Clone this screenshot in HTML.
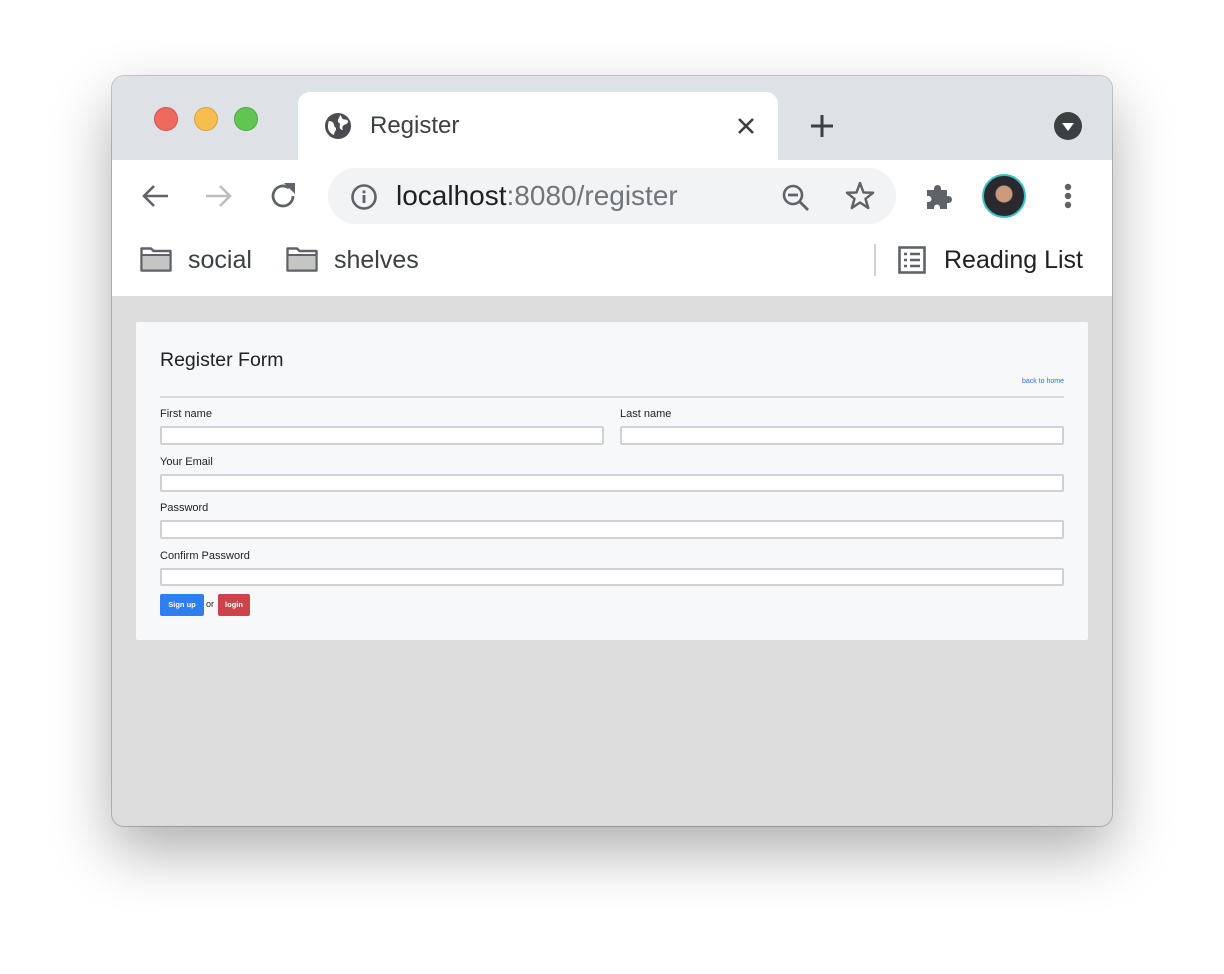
<!DOCTYPE html>
<html><head><style>
*{box-sizing:border-box;margin:0;padding:0}
body{width:1224px;height:974px;background:#fff;font-family:"Liberation Sans",sans-serif;position:relative;overflow:hidden}
.win{position:absolute;left:112px;top:76px;width:1000px;height:750px;border-radius:12px;overflow:hidden;background:#dcdcdc;box-shadow:0 25px 60px rgba(0,0,0,.32),0 0 0 1px rgba(0,0,0,.2)}
.abs{position:absolute}
.strip{left:0;top:0;width:1000px;height:84px;background:#dee1e6}
.dot{width:24px;height:24px;border-radius:50%;top:31px}
.tab{left:186px;top:16px;width:480px;height:70px;background:#fff;border-radius:12px 12px 0 0}
.tb{left:0;top:84px;width:1000px;height:136px;background:#fff}
.url{left:216px;top:92px;width:568px;height:56px;border-radius:28px;background:#f1f3f4}
.t{font-size:25px;color:#3c4043;white-space:nowrap}
.card{left:24px;top:246px;width:952px;height:318px;background:#f7f8fa;border-radius:2px}
.lbl{font-size:11px;color:#222;position:absolute}
.inp{position:absolute;height:19px;background:#fff;border:2px solid #cfd1d4;border-radius:2px}
</style></head><body>
<div class="win">
<div class="abs strip"></div>
<div class="abs dot" style="left:42px;background:#ee6a5f;border:1px solid #d5534a"></div>
<div class="abs dot" style="left:82px;background:#f5be4f;border:1px solid #d9a23c"></div>
<div class="abs dot" style="left:122px;background:#61c554;border:1px solid #4aa93f"></div>
<div class="abs tab"></div>
<svg class="abs" style="left:212px;top:36px" width="28" height="28" viewBox="0 0 28 28"><circle cx="14" cy="14" r="13" fill="#4a4c50"/><path d="M5 9c3 0 5 2 5 4s2 2 2 4-2 3-2 6c-3-1-6-4-6-8 0-2 0-4 1-6zM16 3c2 1 1 3 3 4s4 0 5 2c0 3-2 3-4 4s-2 4-1 5c-3 0-4-3-3-5s-3-2-2-5 2-3 2-5z" fill="#fff"/></svg>
<div class="abs t" style="left:258px;top:36px;font-size:24px">Register</div>
<svg class="abs" style="left:624px;top:40px" width="20" height="20"><path d="M3 3L17 17M17 3L3 17" stroke="#3c4043" stroke-width="2.6"/></svg>
<svg class="abs" style="left:697px;top:37px" width="26" height="26"><path d="M13 2V24M2 13H24" stroke="#3c4043" stroke-width="3"/></svg>
<svg class="abs" style="left:941px;top:35px" width="30" height="30"><circle cx="15" cy="15" r="14" fill="#3c4043"/><path d="M9 12H21L15 20Z" fill="#fff"/></svg>
<div class="abs tb"></div>
<svg class="abs" style="left:28px;top:106px" width="30" height="28"><path d="M28 14H4M14 4L4 14L14 24" stroke="#5f6368" stroke-width="2.6" fill="none"/></svg>
<svg class="abs" style="left:92px;top:106px" width="30" height="28"><path d="M2 14H26M16 4L26 14L16 24" stroke="#bdbdbd" stroke-width="2.6" fill="none"/></svg>
<svg class="abs" style="left:156px;top:104px" width="32" height="32"><path d="M25 16A10 10 0 1 1 21 8" stroke="#5f6368" stroke-width="2.8" fill="none"/><path d="M16 3H27V14Z" fill="#5f6368"/></svg>
<div class="abs url"></div>
<svg class="abs" style="left:238px;top:107px" width="28" height="28"><circle cx="14" cy="14" r="11.5" stroke="#5f6368" stroke-width="2.6" fill="none"/><rect x="12.6" y="12" width="2.8" height="8" fill="#5f6368"/><rect x="12.6" y="7.5" width="2.8" height="2.8" fill="#5f6368"/></svg>
<div class="abs t" style="left:284px;top:104px;font-size:28px;color:#202124">localhost<span style="color:#70757a">:8080/register</span></div>
<svg class="abs" style="left:668px;top:106px" width="32" height="32"><circle cx="13" cy="13" r="9" stroke="#5f6368" stroke-width="2.6" fill="none"/><path d="M8 13H18M20 20L28 28" stroke="#5f6368" stroke-width="2.8"/></svg>
<svg class="abs" style="left:732px;top:104px" width="32" height="32"><path d="M16 3L19.5 12.5L29 12.8L21.5 18.8L24.2 28L16 22.5L7.8 28L10.5 18.8L3 12.8L12.5 12.5Z" stroke="#5f6368" stroke-width="2.5" fill="none" stroke-linejoin="round"/></svg>
<svg class="abs" style="left:812px;top:104px" width="32" height="32"><path d="M3 10H10V8.5A3.5 3.5 0 0 1 17 8.5V10H23V16H24.5A3.5 3.5 0 0 1 24.5 23H23V29H16V27.5A3 3 0 0 0 10 27.5V29H3V22H4.5A3 3 0 0 0 4.5 16H3Z" fill="#5f6368"/></svg>
<div class="abs" style="left:870px;top:98px;width:44px;height:44px;border-radius:50%;background:radial-gradient(circle at 50% 45%,#c99b7c 0 8px,#2a2a2e 9px);border:2px solid #3cc0c8"></div>
<svg class="abs" style="left:946px;top:104px" width="20" height="32"><circle cx="10" cy="7" r="3.2" fill="#5f6368"/><circle cx="10" cy="16" r="3.2" fill="#5f6368"/><circle cx="10" cy="25" r="3.2" fill="#5f6368"/></svg>
<svg class="abs" style="left:28px;top:170px" width="32" height="26"><path d="M1.5 2.5H11L13.5 5H30.5V24.5H1.5Z" fill="#fff" stroke="#5f6368" stroke-width="2.4" stroke-linejoin="round"/><rect x="2.5" y="10" width="27" height="13.5" fill="#c5c5c5"/><path d="M1.5 9H30.5" stroke="#5f6368" stroke-width="2"/></svg>
<div class="abs t" style="left:76px;top:170px">social</div>
<svg class="abs" style="left:174px;top:170px" width="32" height="26"><path d="M1.5 2.5H11L13.5 5H30.5V24.5H1.5Z" fill="#fff" stroke="#5f6368" stroke-width="2.4" stroke-linejoin="round"/><rect x="2.5" y="10" width="27" height="13.5" fill="#c5c5c5"/><path d="M1.5 9H30.5" stroke="#5f6368" stroke-width="2"/></svg>
<div class="abs t" style="left:222px;top:170px">shelves</div>
<div class="abs" style="left:762px;top:168px;width:2px;height:32px;background:#d0d0d0"></div>
<svg class="abs" style="left:786px;top:170px" width="28" height="28"><rect x="1.5" y="1.5" width="25" height="25" stroke="#5f6368" stroke-width="2.6" fill="none"/><path d="M6 8h3M12 8h10M6 14h3M12 14h10M6 20h3M12 20h10" stroke="#5f6368" stroke-width="2.4"/></svg>
<div class="abs t" style="left:832px;top:170px;color:#202124">Reading List</div>
<div class="abs card">
<div class="abs" style="left:24px;top:27px;font-size:19.5px;color:#222">Register Form</div>
<div class="abs" style="right:24px;top:56px;font-size:7px;color:#2f6fe0">back to home</div>
<div class="abs" style="left:24px;top:74px;width:904px;height:2px;background:#d8d9db"></div>
<div class="lbl" style="left:24px;top:86px">First name</div>
<div class="lbl" style="left:484px;top:86px">Last name</div>
<div class="inp" style="left:24px;top:104px;width:444px"></div>
<div class="inp" style="left:484px;top:104px;width:444px"></div>
<div class="lbl" style="left:24px;top:134px">Your Email</div>
<div class="inp" style="left:24px;top:152px;width:904px;height:18px"></div>
<div class="lbl" style="left:24px;top:180px">Password</div>
<div class="inp" style="left:24px;top:198px;width:904px"></div>
<div class="lbl" style="left:24px;top:228px">Confirm Password</div>
<div class="inp" style="left:24px;top:246px;width:904px;height:18px"></div>
<div class="abs" style="left:24px;top:272px;width:44px;height:22px;background:#2f7ef0;border-radius:2px;color:#fff;font-size:7.5px;font-weight:bold;text-align:center;line-height:22px">Sign up</div>
<div class="abs" style="left:70px;top:277px;font-size:9px;color:#222">or</div>
<div class="abs" style="left:82px;top:272px;width:32px;height:22px;background:#cc434b;border-radius:2px;color:#fff;font-size:7.5px;font-weight:bold;text-align:center;line-height:22px">login</div>
</div>
</div>
</body></html>
